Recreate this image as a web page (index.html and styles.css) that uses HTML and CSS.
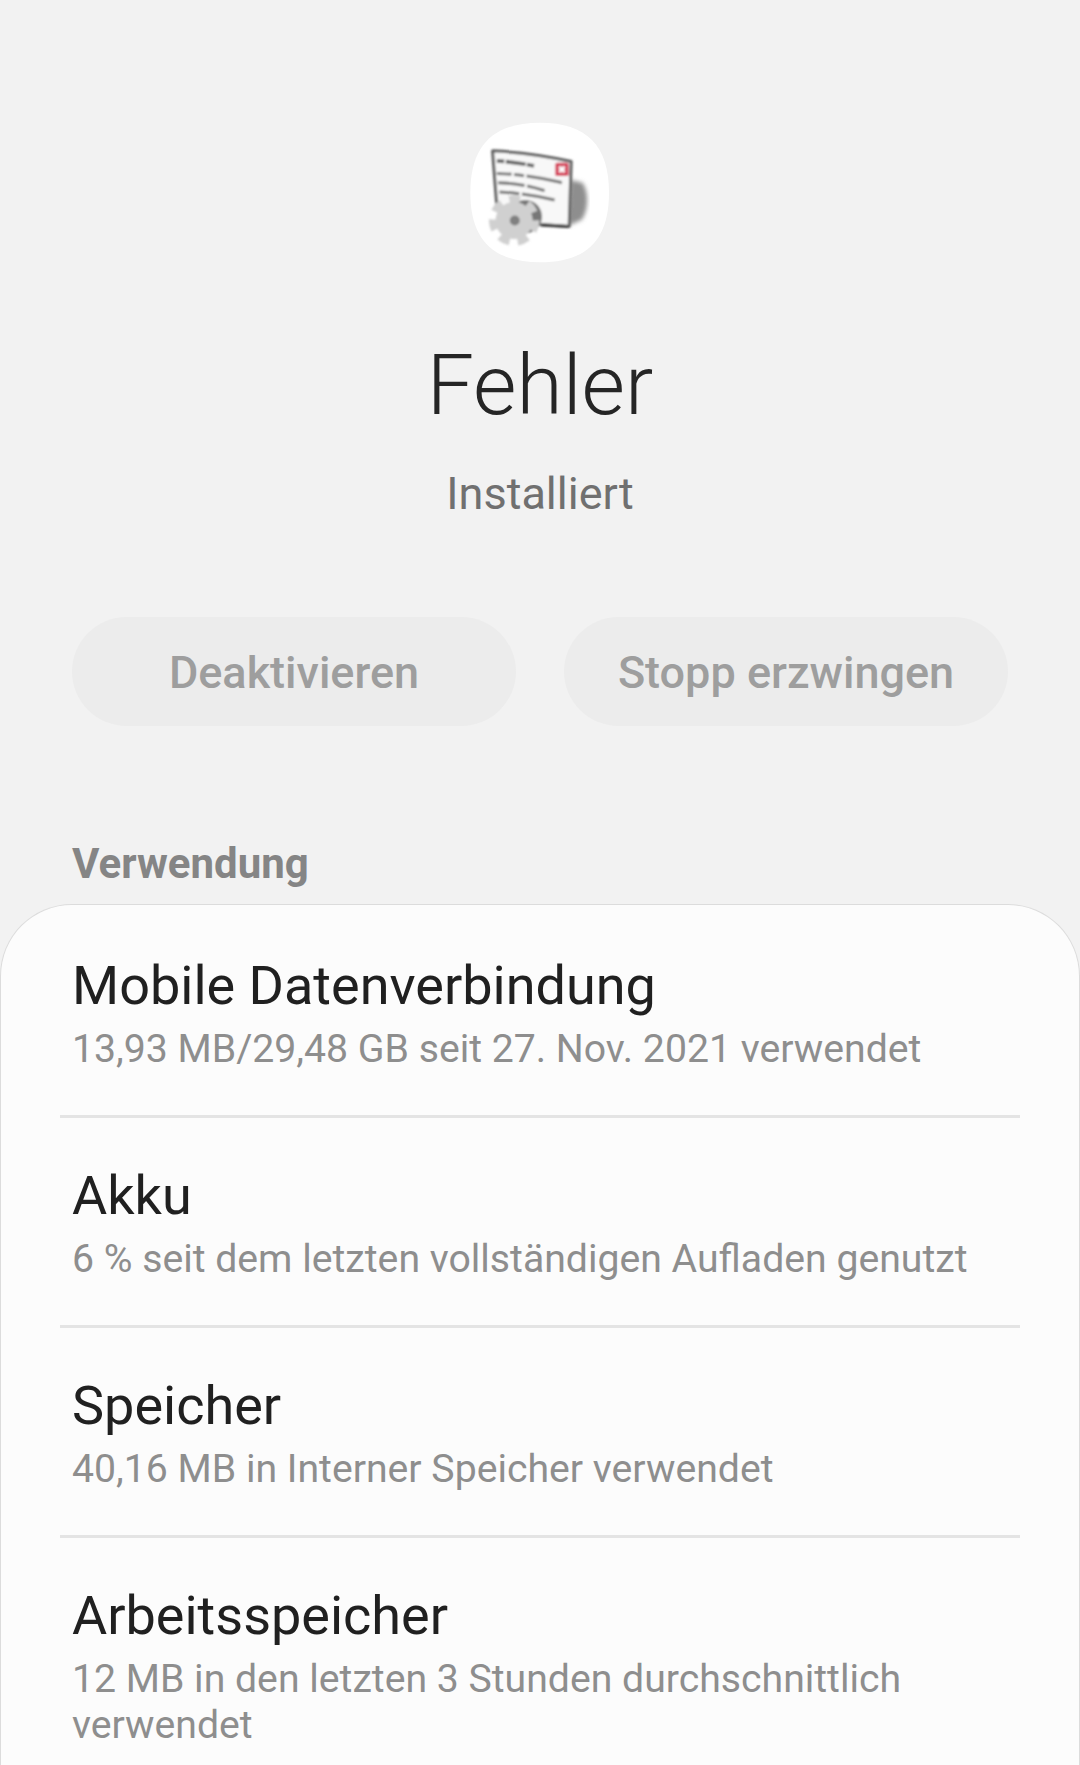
FILE: index.html
```html
<!DOCTYPE html>
<html lang="de">
<head>
  <meta charset="UTF-8">
  <meta name="viewport" content="width=device-width, initial-scale=1.0">
  <title>Fehler - App-Info</title>
  <link rel="stylesheet" href="styles.css">
</head>
<body>
  <div class="screen">
    <div class="app-head">
      <svg class="app-icon" viewBox="90 65 420 425" width="140" height="141">
        <defs>
          <filter id="soft"><feGaussianBlur stdDeviation="2.6"/></filter>
          <filter id="softer"><feGaussianBlur stdDeviation="6"/></filter>
        </defs>
        <path d="M300 67C440 67 508 135 508 278C508 420 440 488 300 488C160 488 90 420 90 278C90 135 160 67 300 67Z" fill="#fff"/>
        <path d="M392 240L428 248C448 275 446 330 426 360L385 378Z" fill="#8e8e8e" filter="url(#softer)"/>
        <g filter="url(#soft)">
          <path d="M157 152Q280 158 394 184L388 380L305 376L170 320Z" fill="#f8f8f8" stroke="#5f5f5f" stroke-width="9" stroke-linejoin="round"/>
          <path d="M170 182Q230 186 285 198" fill="none" stroke="#666" stroke-width="11" stroke-dasharray="22 5 60 4"/>
          <path d="M170 220Q270 224 366 248" fill="none" stroke="#777" stroke-width="9" stroke-dasharray="44 8 30 8 100 0"/>
          <path d="M174 248Q245 250 314 272" fill="none" stroke="#777" stroke-width="9" stroke-dasharray="80 8 50 0"/>
          <path d="M178 276Q260 280 344 300" fill="none" stroke="#777" stroke-width="9" stroke-dasharray="60 8 100 0"/>
          <rect x="346" y="188" width="40" height="40" rx="5" fill="#d6455c"/>
          <path d="M358 200L374 216M374 200L358 216" stroke="#fff" stroke-width="8"/>
          <path d="M305 374L385 380" stroke="#3a3a3a" stroke-width="9"/>
          <circle cx="256" cy="350" r="50" fill="#777"/>
          <circle cx="222" cy="362" r="56" fill="#d0d0d0"/>
          <circle cx="222" cy="362" r="64" fill="none" stroke="#d0d0d0" stroke-width="24" stroke-dasharray="32 25"/>
          <circle cx="224" cy="362" r="15" fill="#808080"/>
        </g>
      </svg>
      <h1 class="app-name">Fehler</h1>
      <div class="app-status">Installiert</div>
    </div>

    <div class="actions">
      <div class="action-btn">Deaktivieren</div>
      <div class="action-btn">Stopp erzwingen</div>
    </div>

    <div class="section-title">Verwendung</div>

    <div class="card">
      <div class="row">
        <div class="row-title">Mobile Datenverbindung</div>
        <div class="row-sub">13,93 MB/29,48 GB seit 27. Nov. 2021 verwendet</div>
      </div>
      <div class="row">
        <div class="row-title">Akku</div>
        <div class="row-sub">6 % seit dem letzten vollständigen Aufladen genutzt</div>
      </div>
      <div class="row">
        <div class="row-title">Speicher</div>
        <div class="row-sub">40,16 MB in Interner Speicher verwendet</div>
      </div>
      <div class="row">
        <div class="row-title">Arbeitsspeicher</div>
        <div class="row-sub">12 MB in den letzten 3 Stunden durchschnittlich verwendet</div>
      </div>
    </div>
  </div>
</body>
</html>
```

FILE: styles.css
```css
html, body {
  margin: 0;
  padding: 0;
}
body {
  width: 1080px;
  height: 1765px;
  overflow: hidden;
  background: #f2f2f2;
  font-family: Roboto, "Noto Sans", sans-serif;
}
.screen {
  display: flex;
  flex-direction: column;
  height: 1765px;
  padding-top: 122px;
  box-sizing: border-box;
}
.app-head {
  display: flex;
  flex-direction: column;
  align-items: center;
}
.app-icon {
  display: block;
}
.app-name {
  margin: 74px 0 0;
  font-size: 84px;
  line-height: 98px;
  font-weight: 300;
  color: #252525;
}
.app-status {
  margin-top: 32px;
  font-size: 45px;
  line-height: 54px;
  color: #707070;
}
.actions {
  display: flex;
  justify-content: space-between;
  margin-top: 96px;
  padding: 0 72px;
}
.action-btn {
  width: 444px;
  height: 109px;
  padding-top: 2px;
  box-sizing: border-box;
  border-radius: 55px;
  background: #ececec;
  color: #9e9e9e;
  font-size: 45px;
  font-weight: 500;
  display: flex;
  align-items: center;
  justify-content: center;
}
.section-title {
  margin-top: 114px;
  padding-left: 72px;
  font-size: 42px;
  line-height: 48px;
  font-weight: 700;
  color: #858585;
}
.card {
  margin-top: 16px;
  flex: 1;
  background: #fcfcfc;
  border: 1px solid #dcdcdc;
  border-bottom: none;
  border-radius: 72px 72px 0 0;
}
.row {
  margin: 0 59px;
  padding: 46px 12px 43px;
  border-bottom: 3px solid #e4e4e4;
}
.row:first-child {
  padding-top: 49px;
}
.row:last-child {
  border-bottom: none;
}
.row-title {
  font-size: 54px;
  line-height: 64px;
  color: #202020;
}
.row-sub {
  margin-top: 8px;
  font-size: 39.2px;
  line-height: 46px;
  color: #8e8e8e;
}
```
